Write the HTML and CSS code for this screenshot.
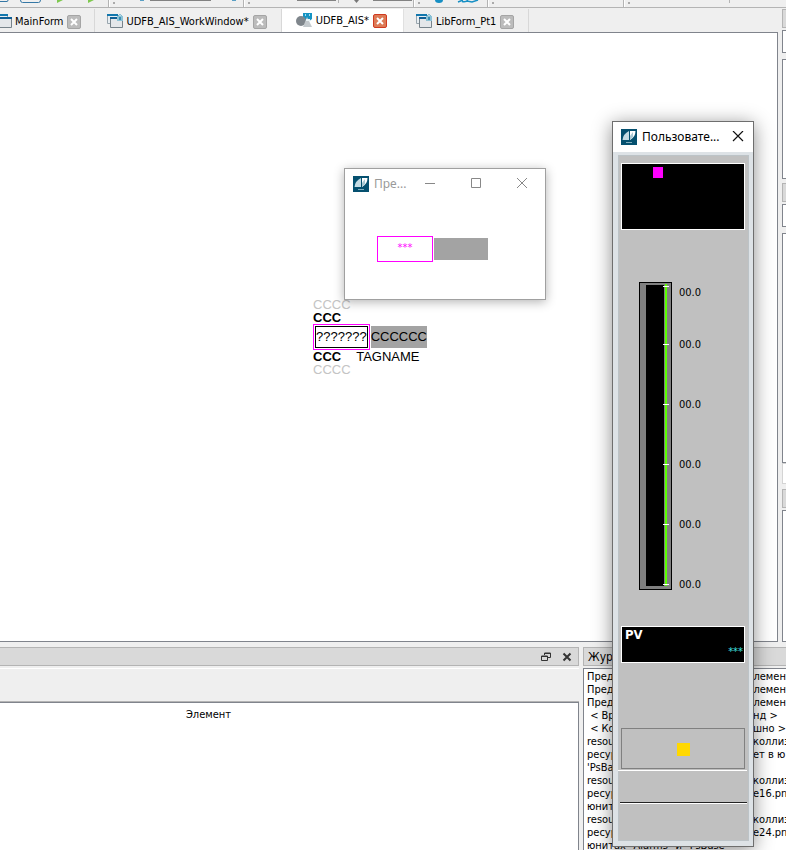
FILE: index.html
```html
<!DOCTYPE html>
<html lang="ru">
<head>
<meta charset="utf-8">
<title>UDFB_AIS</title>
<link rel="stylesheet" href="styles.css">
</head>
<body>
<svg width="0" height="0" class="defs" aria-hidden="true">
  <symbol id="form" viewBox="0 0 16 16">
    <path d="M.5 1.500h11v9H.5z" fill="#e8eef2" stroke="#9aa6ae"/>
    <path d="M0 0h12v2H0z" fill="#1277ad"/>
    <path d="M3.500 4.500h12v9h-12z" fill="#e4e7ea" stroke="#77838b"/>
    <path d="M3 3h13v2H3z" fill="#0f5f95"/>
  </symbol>
  <symbol id="form-lock" viewBox="0 0 16 16">
    <path d="M.5 1.500h11v8H.5z" fill="#e8eef2" stroke="#9aa6ae"/>
    <path d="M0 0h11v2H0z" fill="#1277ad"/>
    <path d="M3.500 4.500h12v9h-12z" fill="#e4e7ea" stroke="#77838b"/>
    <path d="M3 3h8v2H3z" fill="#0f5f95"/>
    <path d="M11.500 3V1.500q1.500-2 3 0V3" fill="none" stroke="#5ba9c6"/>
    <path d="M10 2h6v5h-6z" fill="#8cc2d6"/>
    <path d="M12 3h2v3h-2z" fill="#3c8fb4"/>
  </symbol>
  <symbol id="shapes" viewBox="0 0 16 16">
    <path d="M7 0h9v6l-4 3-5-3z" fill="#1594c4"/>
    <path d="M9 1h1v2H9zM13 1h1v2h-1z" fill="#a8dcec"/>
    <circle cx="5" cy="8" r="5" fill="#7f868c"/>
    <path d="M11 4l5 10H7z" fill="#c3c9cd"/>
    <path d="M10 6h4v2h-4z" fill="#e9f2f5"/>
  </symbol>
  <symbol id="app" viewBox="0 0 16 16">
    <path d="M0 0h16v16H0z" fill="#05506f"/>
    <path d="M8 2v9H1.500Q2 5 8 2z" fill="#c5dce4"/>
    <path d="M9 2h5.500Q14.500 8 9 11z" fill="#fff"/>
    <path d="M9 7l3-4v5L9 11z" fill="#a9c9d4"/>
    <path d="M5 13h6v1H5z" fill="#83aebd"/>
  </symbol>
  <symbol id="x" viewBox="0 0 12 12">
    <path d="M3 3l6 6M9 3l-6 6" stroke="currentColor" stroke-width="2"/>
  </symbol>
</svg>

<header class="toolbar">
  <svg width="786" height="7" aria-hidden="true">
    <g fill="none" stroke="#3577a5"><path d="M0 1.500h7q1 0 1-1.500M20.500 0q0 2.500 2 2.500h16q2 0 2-2.500"/></g>
    <path d="M57 0h6l-6 3zM88 0h6l-6 3z" fill="#7fc950"/>
    <path d="M140 0h4v1h-4zM232 0h4v1h-4z" fill="#5a9fc4"/>
    <path d="M150 0h61v1h-61zM297 0h39v1h-39zM373 0h39v1h-39z" fill="#828282"/>
    <path d="M354 0h5l-2.500 3z" fill="#777"/>
    <path d="M435 0h8q0 3-4 3t-4-3z" fill="#168fc4"/>
    <path d="M458 2l5-2M462 1.500q4 1 6-1.500M467 1l5 1 6-2" fill="none" stroke="#168fc4" stroke-width="1.500"/>
    <path d="M108 0h1v7h-1zM243 0h1v7h-1zM413 0h1v7h-1zM487 0h1v7h-1zM623 0h1v7h-1zM338 0h1v3h-1zM729 0h1v3h-1z" fill="#b4b4b4"/>
    <path d="M109 0h1v7h-1zM244 0h1v7h-1zM414 0h1v7h-1zM488 0h1v7h-1zM624 0h1v7h-1z" fill="#fff"/>
    <path d="M113 2h2v2h-2zM248 2h2v2h-2zM418 2h2v2h-2zM492 2h2v2h-2zM628 2h2v2h-2z" fill="#aaa"/>
  </svg>
</header>

<div class="work">
  <main class="editor">
    <nav class="tabs" aria-label="Формы">
      <div class="tab first"><svg class="icon"><use href="#form"/></svg><a href="#">MainForm</a><button class="close" aria-label="Закрыть"><svg><use href="#x"/></svg></button></div>
      <div class="tab"><svg class="icon"><use href="#form-lock"/></svg><a href="#">UDFB_AIS_WorkWindow*</a><button class="close" aria-label="Закрыть"><svg><use href="#x"/></svg></button></div>
      <div class="tab active"><svg class="icon"><use href="#shapes"/></svg><a href="#">UDFB_AIS*</a><button class="close" aria-label="Закрыть"><svg><use href="#x"/></svg></button></div>
      <div class="tab"><svg class="icon"><use href="#form-lock"/></svg><a href="#">LibForm_Pt1</a><button class="close" aria-label="Закрыть"><svg><use href="#x"/></svg></button></div>
    </nav>
    <div class="canvas">
      <div class="symbol">
        <div class="faint">CCCC</div>
        <div class="strong">CCC</div>
        <div class="fields"><span class="value"><span>???????</span></span><span class="unit">CCCCCC</span></div>
        <div class="tagline"><span class="strong">CCC</span><span>TAGNAME</span></div>
        <div class="faint">CCCC</div>
      </div>
    </div>
  </main>
  <aside class="side">
    <div class="bar"></div><div class="field"></div><div class="box one"></div>
    <div class="bar"></div><div class="field"></div><div class="box two"></div><div class="foot"></div>
    <div class="bar"></div><div class="box three"></div>
  </aside>
</div>

<div class="docks">
  <section class="dock">
    <div class="dock-title">
      <button aria-label="Открепить"><svg width="10" height="10"><path d="M3.500 3V1h6v4.500H7M.5 4h6v4.500h-6zM3 1.500h6M0 4.500h6" fill="none" stroke="#333"/></svg></button>
      <button aria-label="Закрыть"><svg width="10" height="10"><path d="M1.500 1.500l7 7M8.500 1.500l-7 7" stroke="#333" stroke-width="2"/></svg></button>
    </div>
    <div class="filter"></div>
    <table class="grid"><thead><tr><th scope="col">Элемент</th><th></th></tr></thead></table>
  </section>
  <section class="dock">
    <div class="dock-title named">Журн</div>
    <div class="log">
      <p class="wide"><span>Преду</span><span>элемент</span></p>
      <p class="wide"><span>Преду</span><span>элемент</span></p>
      <p class="wide"><span>Преду</span><span>элемент</span></p>
      <p><span>&nbsp;&lt; Вре</span><span>нд &gt;</span></p>
      <p><span>&nbsp;&lt; Ком</span><span>шно &gt;</span></p>
      <p><span>resour</span><span>коллиз</span></p>
      <p><span>ресур</span><span>ет в ю</span></p>
      <p><span>'PsBas</span></p>
      <p><span>resour</span><span>коллиз</span></p>
      <p><span>ресур</span><span>e16.png</span></p>
      <p><span>юнита</span></p>
      <p><span>resour</span><span>коллиз</span></p>
      <p><span>ресур</span><span>e24.png</span></p>
      <p><span>юнитах "Alarms" и "PsBase"</span></p>
    </div>
  </section>
</div>

<section class="window preview">
  <div class="caption">
    <svg class="icon"><use href="#app"/></svg><span class="name">Пре...</span>
    <button aria-label="Свернуть"><svg width="12" height="12"><path d="M1 5.500h10" stroke="#888"/></svg></button>
    <button aria-label="Развернуть"><svg width="12" height="12"><path d="M1.500 .5h9v9h-9z" fill="none" stroke="#888"/></svg></button>
    <button aria-label="Закрыть"><svg width="12" height="12"><path d="M1 0l10 10M11 0L1 10" stroke="#888"/></svg></button>
  </div>
  <div class="sample"><span class="stars">***</span><span class="blank"></span></div>
</section>

<section class="window face">
  <div class="caption">
    <svg class="icon"><use href="#app"/></svg><span class="name">Пользовате...</span>
    <button aria-label="Закрыть"><svg width="12" height="12"><path d="M1 0l10 10M11 0L1 10" stroke="#111" stroke-width="1.200"/></svg></button>
  </div>
  <div class="plate">
    <div class="display"><i class="mark"></i></div>
    <div class="gauge">
      <svg width="33" height="308" aria-hidden="true" shape-rendering="crispEdges">
        <path d="M0 0h33v308H0z" fill="#000"/><path d="M1 1h31v306H1z" fill="#808080"/>
        <path d="M7 3h18v301H7z" fill="#000"/><path d="M26 2h2v302h-2z" fill="#5cff00"/>
        <path d="M24 4h6v1h-6zM24 62h6v1h-6zM24 122h6v1h-6zM24 182h6v1h-6zM24 242h6v1h-6zM24 302h6v1h-6z" fill="#fff"/>
      </svg>
      <div class="scale"><span>00.0</span><span>00.0</span><span>00.0</span><span>00.0</span><span>00.0</span><span>00.0</span></div>
    </div>
    <div class="pv"><b>PV</b><span>***</span></div>
    <div class="state"><i></i></div>
    <div class="rule light"></div>
    <div class="rule dark"></div>
  </div>
</section>
</body>
</html>
```
FILE: styles.css
```css
* { box-sizing: border-box; }
body {
  margin: 0;
  height: 100vh;
  overflow: hidden;
  position: relative;
  display: flex;
  flex-direction: column;
  background: #efefef;
  color: #000;
  font: 11px/13px "DejaVu Sans Condensed", "Noto Sans", sans-serif;
}
button {
  padding: 0;
  border: 0;
  background: none;
  display: flex;
  align-items: center;
  justify-content: center;
}
p { margin: 0; }
a { color: inherit; text-decoration: none; }
svg { display: block; }
.defs { position: absolute; }
.icon { width: 16px; height: 16px; flex: none; }

.toolbar { height: 8px; overflow: hidden; border-bottom: 1px solid #b4b4b4; }
.work { flex: 1; min-height: 0; display: flex; gap: 4px; }
.editor { flex: 1; min-width: 0; display: flex; flex-direction: column; }

.tabs { height: 24px; display: flex; padding-top: 1px; }
.tab {
  display: flex;
  align-items: center;
  gap: 4px;
  height: 23px;
  padding: 2px 14px 0 12px;
  border-right: 1px solid #d8d8d8;
  white-space: nowrap;
}
.tab.first { padding: 2px 13px 0 0; margin-left: -4px; gap: 3px; }
.tab.active { background: #fff; padding: 0 16px 0 14px; border-color: #e0e0e0; }
.close {
  width: 14px;
  height: 14px;
  border: 1px solid #a5a5a5;
  border-radius: 2px;
  background: #bcbcbc;
  color: #fff;
}
.close svg { width: 12px; height: 12px; flex: none; }
.active .close { background: #dd7a56; border-color: #d03a20; }

.canvas {
  flex: 1;
  background: #fff;
  border: solid #80848c;
  border-width: 1px 1px 1px 0;
  position: relative;
}
.symbol {
  position: absolute;
  left: 313px;
  top: 265px;
  font: 13px/13px "Liberation Sans", sans-serif;
}
.faint { color: #c4c4c4; }
.strong { font-weight: bold; }
.fields { display: flex; align-items: center; gap: 1px; }
.value { border: 1px solid #f0f; padding: 1px; height: 26px; }
.value span { display: block; border: 1px solid #000; height: 22px; line-height: 20px; }
.unit { background: #a3a3a3; height: 22px; line-height: 22px; }
.tagline { display: flex; gap: 15px; }

.side { width: 4px; flex: none; overflow: hidden; padding-top: 1px; }
.side div { border: 1px solid #80848c; border-right: 0; background: #fff; }
.side .bar { height: 19px; background: #d9d9d9; border-color: #b4b4b4; margin-bottom: 2px; }
.side .field { height: 23px; margin-bottom: 6px; }
.side .one { height: 120px; margin-bottom: 4px; }
.side .two { height: 230px; }
.side .foot { height: 21px; border-color: #d4d4d4; margin-bottom: 5px; }
.side .three { height: 132px; }

.docks {
  height: 208px;
  padding-top: 5px;
  display: grid;
  grid-template-columns: minmax(0, 579fr) minmax(0, 203fr);
  gap: 4px;
}
.dock { display: flex; flex-direction: column; min-height: 0; }
.dock-title {
  height: 19px;
  flex: none;
  display: flex;
  align-items: center;
  justify-content: flex-end;
  gap: 11px;
  padding-right: 6px;
  background: #d9d9d9;
  border: 1px solid #b4b4b4;
  border-left: 0;
}
.dock-title.named {
  justify-content: flex-start;
  padding: 2px 0 0 4px;
  border-left: 1px solid #b4b4b4;
  border-right: 0;
  font-size: 12px;
  margin-bottom: 2px;
}
.filter { height: 34px; margin-top: 2px; border-top: 1px solid #fff; border-bottom: 1px solid #b4b4b4; }
.grid {
  flex: 1;
  display: block;
  background: #fff;
  border-collapse: collapse;
  border-top: 1px solid #80848c;
  border-right: 1px solid #80848c;
}
.grid thead, .grid tr { display: flex; width: 100%; }
.grid th { flex: 161; height: 24px; line-height: 24px; padding: 0; font-weight: normal; }
.grid th:first-child { flex: 417; }
.log { flex: 1; min-height: 0; overflow: hidden; padding: 1px 0 0 3px; background: #fff; border: solid #80848c; border-width: 1px 0 0 1px; }
.log p { display: flex; justify-content: space-between; white-space: nowrap; }
.log span + span { width: 33px; flex: none; }
.log .wide span + span { width: 38px; }

.window { position: absolute; background: #fff; }
.caption { display: flex; align-items: center; height: 30px; padding: 0 9px 0 8px; font: 12px/16px "Noto Sans", sans-serif; }
.caption .name { flex: 1; padding-left: 5px; white-space: nowrap; }
.preview {
  left: 344px;
  top: 168px;
  width: 202px;
  height: 132px;
  border: 1px solid #a0a0a0;
  box-shadow: 0 2px 10px rgba(0, 0, 0, .3);
}
.preview .caption { color: #999; padding-right: 0; }
.preview .caption button { width: 46px; }
.sample { display: flex; align-items: center; gap: 1px; padding: 37px 0 0 32px; }
.stars {
  width: 56px;
  height: 26px;
  border: 1px solid #f0f;
  color: #f0f;
  text-align: center;
  font-size: 11px;
  line-height: 22px;
}
.blank { width: 54px; height: 22px; background: #a3a3a3; }

.face {
  left: 612px;
  top: 121px;
  width: 142px;
  border: 1px solid #6e6e6e;
  background: #dde2e6;
  padding: 0 4px 5px 5px;
  box-shadow: 0 3px 18px rgba(0, 0, 0, .45);
}
.face .caption { background: #fff; margin: 0 -4px 3px -5px; }
.plate { background: #c0c0c0; border: 1px solid #bcc3c7; padding: 7px 3px 36px 2px; }
.display { height: 67px; border: 1px solid #fff; background: #000; padding: 3px 0 0 31px; }
.mark { display: block; width: 10px; height: 11px; background: #f0f; }
.gauge { display: flex; gap: 7px; margin: 52px 0 36px 18px; }
.scale { display: grid; grid-template-rows: 52px repeat(4, 60px) 11px; padding-top: 5px; line-height: 12px; }
.pv {
  height: 37px;
  border: 1px solid #fff;
  background: #000;
  color: #fff;
  display: flex;
  flex-direction: column;
  justify-content: space-between;
  padding: 0 1px 3px 3px;
  margin-bottom: 65px;
}
.pv b { font-size: 13px; line-height: 16px; }
.pv span { color: #40e0e0; align-self: flex-end; line-height: 14px; }
.state { height: 41px; border: 1px solid #808080; display: flex; align-items: center; justify-content: center; padding-top: 1px; }
.state i { width: 13px; height: 13px; background: #ffd800; }
.rule { height: 1px; background: #fff; margin: 1px -2px 0 -3px; }
.rule.dark { height: 2px; margin: 31px -2px 0 -1px; border-top: 1px solid #222; }
```
